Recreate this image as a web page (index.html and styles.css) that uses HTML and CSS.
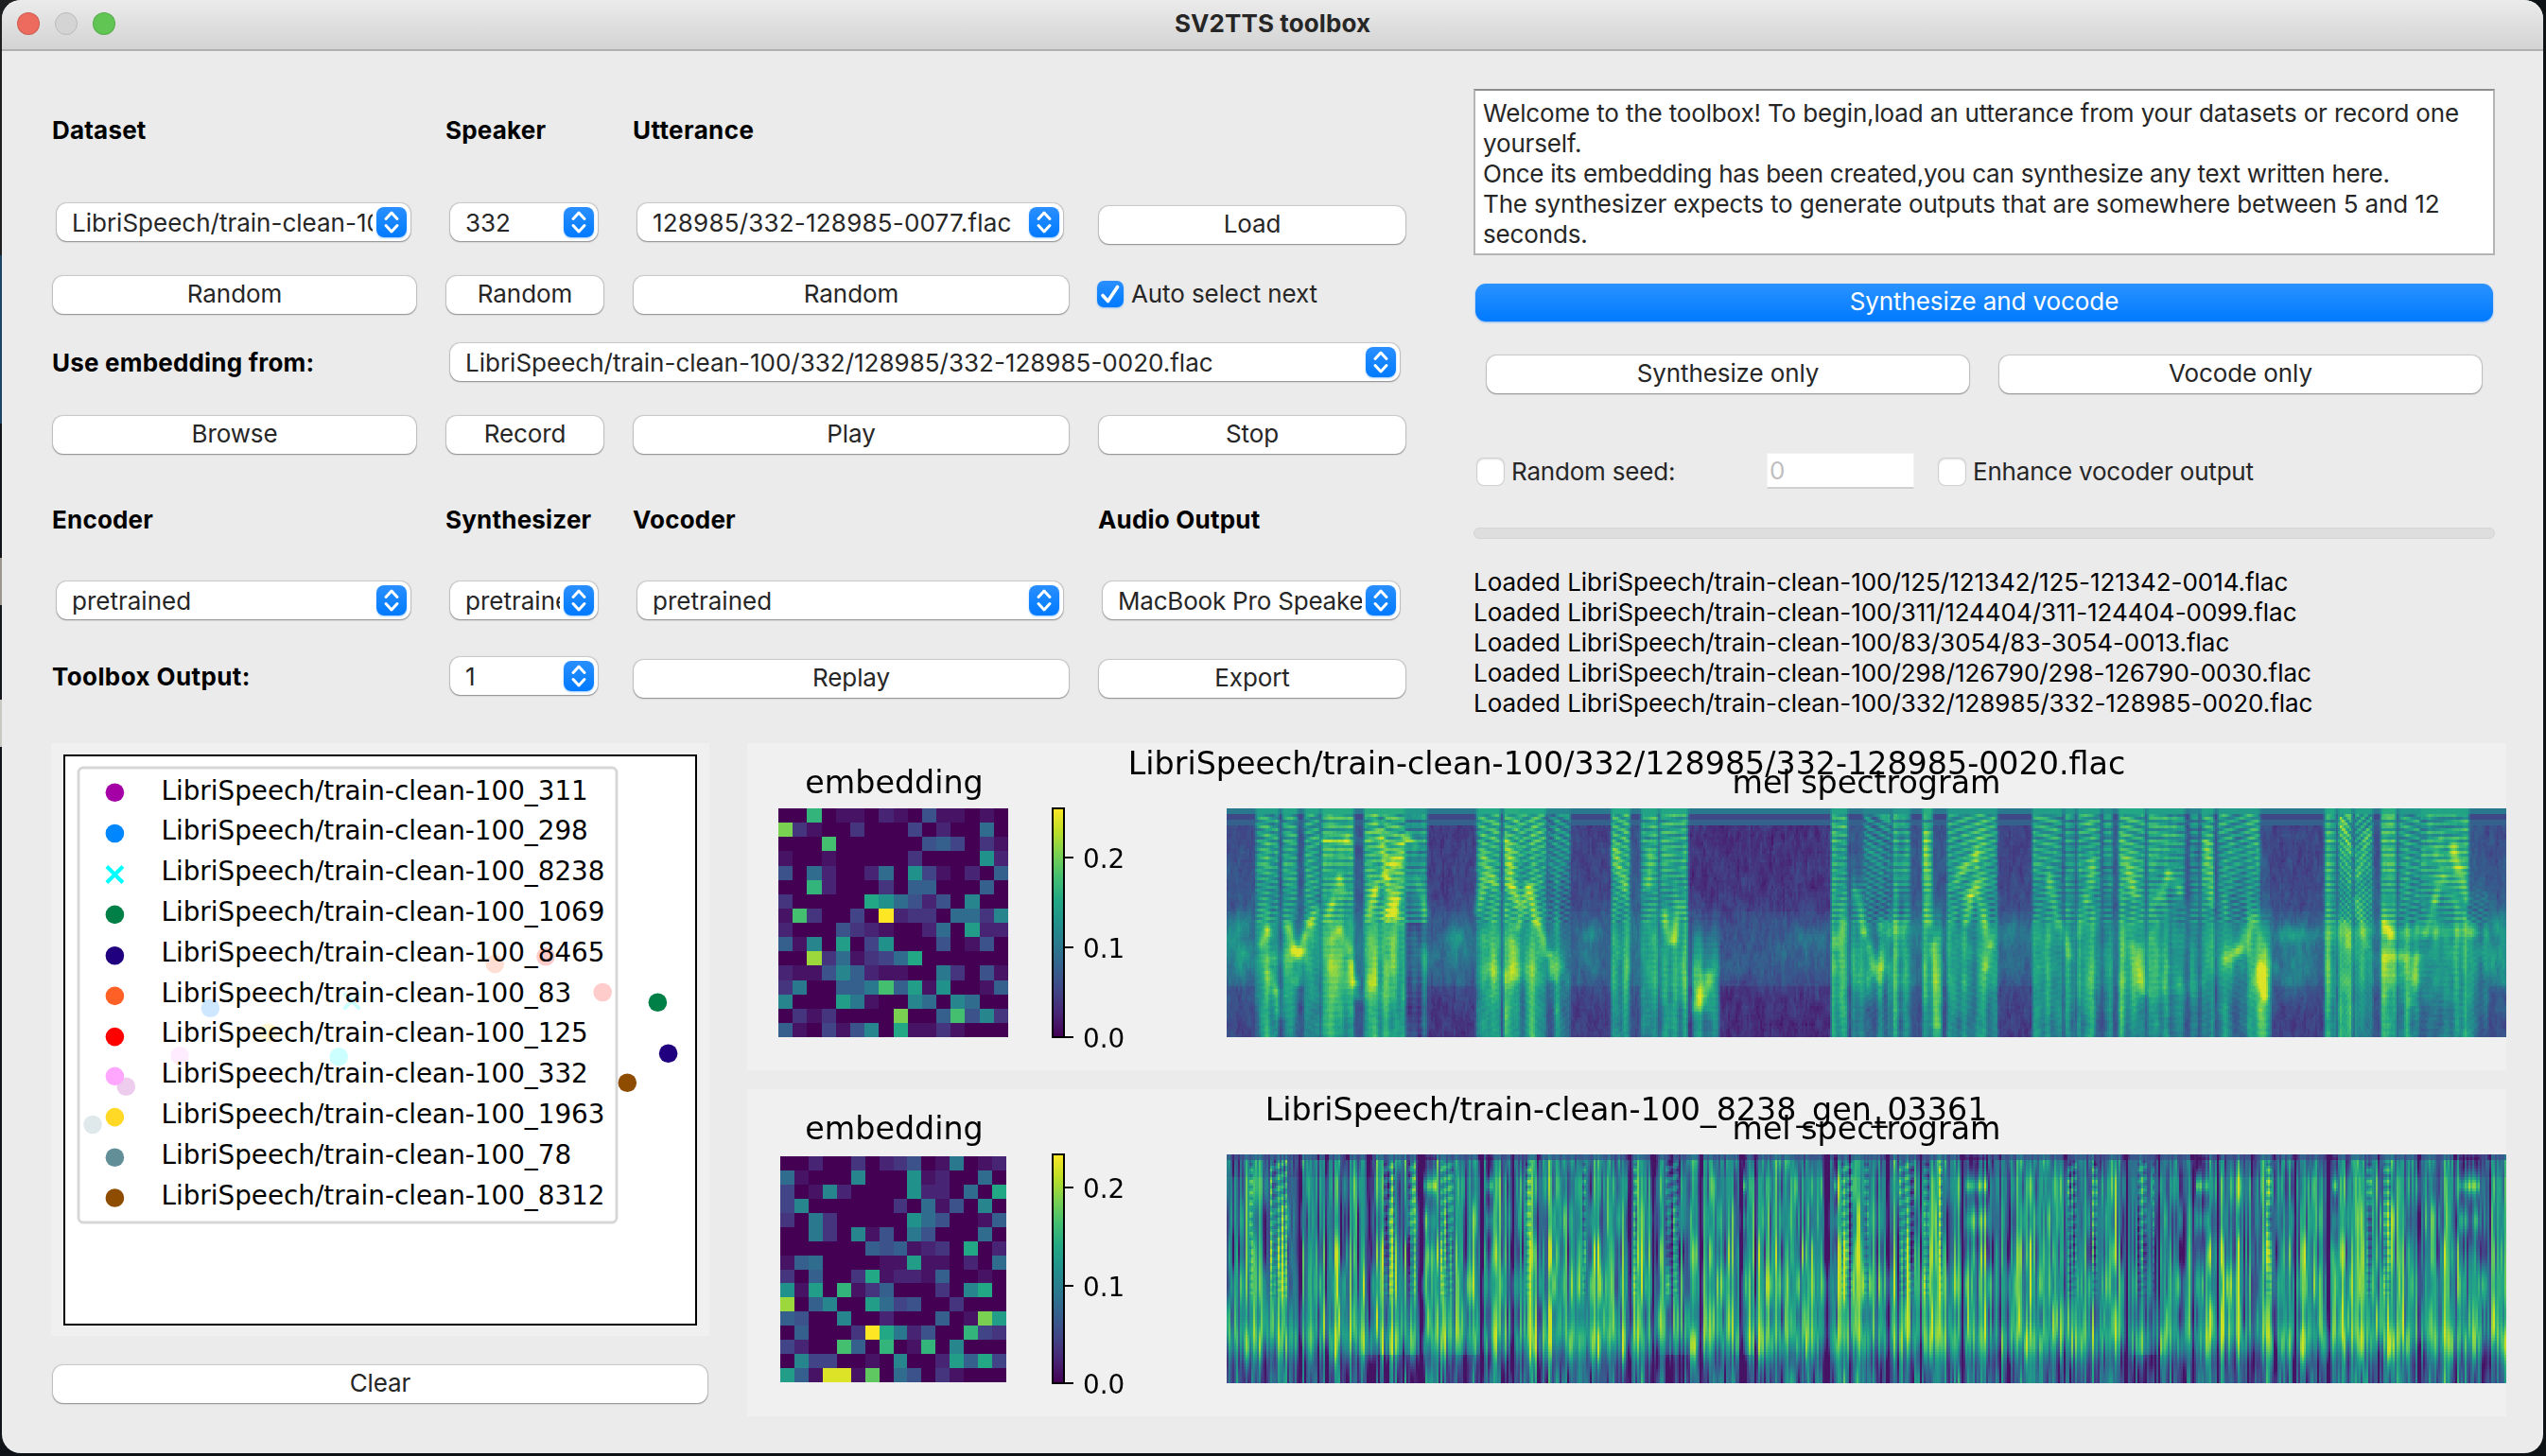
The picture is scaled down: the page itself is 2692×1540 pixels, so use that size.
FILE: index.html
```html
<!DOCTYPE html>
<html lang="en">
<head>
<meta charset="utf-8">
<title>SV2TTS toolbox</title>
<link rel="stylesheet" href="styles.css">
</head>
<body>
<svg class="defs" width="0" height="0">
  <defs>
    <linearGradient id="viridis" x1="0" y1="1" x2="0" y2="0">
      <stop offset="0" stop-color="#440154"/><stop offset=".1" stop-color="#482475"/>
      <stop offset=".2" stop-color="#414487"/><stop offset=".3" stop-color="#355f8d"/>
      <stop offset=".4" stop-color="#2a788e"/><stop offset=".5" stop-color="#21918c"/>
      <stop offset=".6" stop-color="#22a884"/><stop offset=".7" stop-color="#44bf70"/>
      <stop offset=".8" stop-color="#7ad151"/><stop offset=".9" stop-color="#bddf26"/>
      <stop offset="1" stop-color="#fde725"/>
    </linearGradient>
    <symbol id="updown" viewBox="0 0 32 32">
      <path d="M10 12.500 16 6l6 6.500M10 19.500 16 26l6-6.500" fill="none" stroke="#fff" stroke-width="3" stroke-linecap="round" stroke-linejoin="round"/>
    </symbol>
  </defs>
</svg>
<div class="window">
  <header class="titlebar">
    <div class="lights"><i class="light close"></i><i class="light minimize"></i><i class="light zoom"></i></div>
    <h1 class="title">SV2TTS toolbox</h1>
  </header>

  <main class="content">
    <section class="controls">
      <h2 class="label">Dataset</h2><h2 class="label">Speaker</h2><h2 class="label wide span2">Utterance</h2>

      <div class="combo"><span class="value">LibriSpeech/train-clean-100</span><svg class="arrows"><use href="#updown"/></svg></div>
      <div class="combo"><span class="value">332</span><svg class="arrows"><use href="#updown"/></svg></div>
      <div class="combo"><span class="value file">128985/332-128985-0077.flac</span><svg class="arrows"><use href="#updown"/></svg></div>
      <button class="btn low">Load</button>

      <button class="btn">Random</button><button class="btn">Random</button><button class="btn">Random</button>
      <label class="check auto"><span class="box on"><svg width="28" height="28" viewBox="0 0 28 28"><path d="M6 15.500 11.500 21.500 21.500 6.500" fill="none" stroke="#fff" stroke-width="3.600" stroke-linecap="round" stroke-linejoin="round"/></svg></span>Auto select next</label>

      <h2 class="label mid">Use embedding from:</h2>
      <div class="combo span3"><span class="value">LibriSpeech/train-clean-100/332/128985/332-128985-0020.flac</span><svg class="arrows"><use href="#updown"/></svg></div>

      <button class="btn">Browse</button><button class="btn">Record</button><button class="btn">Play</button><button class="btn">Stop</button>

      <h2 class="label">Encoder</h2><h2 class="label">Synthesizer</h2><h2 class="label">Vocoder</h2><h2 class="label">Audio Output</h2>

      <div class="combo"><span class="value">pretrained</span><svg class="arrows"><use href="#updown"/></svg></div>
      <div class="combo"><span class="value">pretrained</span><svg class="arrows"><use href="#updown"/></svg></div>
      <div class="combo"><span class="value">pretrained</span><svg class="arrows"><use href="#updown"/></svg></div>
      <div class="combo"><span class="value device">MacBook Pro Speakers</span><svg class="arrows"><use href="#updown"/></svg></div>

      <h2 class="label mid wide">Toolbox Output:</h2>
      <div class="combo"><span class="value">1</span><svg class="arrows"><use href="#updown"/></svg></div>
      <button class="btn low">Replay</button><button class="btn low">Export</button>
    </section>

    <section class="synth">
      <div class="prompt"><p>Welcome to the toolbox! To begin,load an utterance from your datasets or record one</p><p>yourself.</p><p class="tight">Once its embedding has been created,you can synthesize any text written here.</p><p>The synthesizer expects to generate outputs that are somewhere between 5 and 12</p><p>seconds.</p></div>
      <button class="btn primary">Synthesize and vocode</button>
      <div class="pair"><button class="btn">Synthesize only</button><button class="btn">Vocode only</button></div>
      <div class="options">
        <label class="check seed"><span class="box"></span>Random seed:</label>
        <span class="field">0</span>
        <label class="check"><span class="box"></span>Enhance vocoder output</label>
      </div>
      <div class="progress"></div>
      <div class="log">
        <p>Loaded LibriSpeech/train-clean-100/125/121342/125-121342-0014.flac</p>
        <p>Loaded LibriSpeech/train-clean-100/311/124404/311-124404-0099.flac</p>
        <p>Loaded LibriSpeech/train-clean-100/83/3054/83-3054-0013.flac</p>
        <p>Loaded LibriSpeech/train-clean-100/298/126790/298-126790-0030.flac</p>
        <p>Loaded LibriSpeech/train-clean-100/332/128985/332-128985-0020.flac</p>
      </div>
    </section>

    <section class="projection">
      <svg id="scatter" class="scatter" width="696" height="627" viewBox="54 786 696 627"></svg>
      <button class="btn">Clear</button>
    </section>

    <section class="figures">
      <div class="figure first">
        <canvas class="emb" id="emb1" width="243" height="242"></canvas>
        <canvas class="spec" id="spec1" width="677" height="80"></canvas>
        <svg class="axes" width="1860" height="346" viewBox="790 786 1860 346">
          <text class="big" x="945.500" y="839">embedding</text>
          <text class="big" x="1720" y="819">LibriSpeech/train-clean-100/332/128985/332-128985-0020.flac</text>
          <text class="big" x="1973.500" y="839">mel spectrogram</text>
          <rect class="bar" x="1113" y="855" width="12" height="242"/>
          <path class="tick" d="M1126 907h9M1126 1002h9M1126 1097h9"/>
          <text class="num" x="1145" y="917.700">0.2</text><text class="num" x="1145" y="1012.700">0.1</text><text class="num" x="1145" y="1107.700">0.0</text>
        </svg>
      </div>
      <div class="figure second">
        <canvas class="emb" id="emb2" width="239" height="239"></canvas>
        <canvas class="spec" id="spec2" width="677" height="80"></canvas>
        <svg class="axes" width="1860" height="346" viewBox="790 1152 1860 346">
          <text class="big" x="945.500" y="1205">embedding</text>
          <text class="big" x="1719.500" y="1185">LibriSpeech/train-clean-100_8238_gen_03361</text>
          <text class="big" x="1973.500" y="1205">mel spectrogram</text>
          <rect class="bar" x="1113" y="1221" width="12" height="242"/>
          <path class="tick" d="M1126 1256h9M1126 1360h9M1126 1463h9"/>
          <text class="num" x="1145" y="1267">0.2</text><text class="num" x="1145" y="1371">0.1</text><text class="num" x="1145" y="1474">0.0</text>
        </svg>
      </div>
    </section>
  </main>
</div>
<script src="plots.js"></script>
</body>
</html>
```
FILE: styles.css
```css
* { box-sizing: border-box; }
body {
  margin: 0;
  width: 2692px;
  height: 1540px;
  overflow: hidden;
  font: 400 26px/36px Inter, "Liberation Sans", sans-serif;
  color: #262626;
  background:
    linear-gradient(#1d1f20 0 270px, #1b4567 270px 448px, #101418 448px 590px, #9a958d 590px 640px, #15181b 640px 740px, #c9c7c1 740px 790px, #101418 790px) 0 0 / 20px 1540px no-repeat,
    #0d1214;
}
.defs { position: absolute; }
h1, h2, p { margin: 0; font-size: inherit; }

.window {
  width: 2687px;
  height: 1537px;
  margin-left: 2px;
  border-radius: 20px;
  overflow: hidden;
  background: #ebebeb;
}
.titlebar {
  height: 54px;
  display: grid;
  grid-template-columns: 1fr auto 1fr;
  align-items: center;
  padding: 0 16px 2px;
  background: linear-gradient(#ebebeb, #d3d3d3);
  border-bottom: 2px solid #b0b0b0;
}
.lights { display: flex; gap: 16px; }
.light { width: 24px; height: 24px; border-radius: 50%; border: 1px solid #00000022; }
.close { background: #ec6a5e; }
.minimize { background: #d4d4d4; border-color: #b9b9b9; }
.zoom { background: #61c554; }
.title { font-weight: 700; letter-spacing: 0.1px; line-height: 34px; }

.content {
  display: grid;
  grid-template-columns: 1430px 1fr;
  grid-template-rows: 732px 1fr;
}
.controls {
  padding: 65px 0 0 54px;
  display: grid;
  grid-template-columns: 384px 166px 460px 324px;
  grid-template-rows: 96px 77px 71px 77px 91px 84px 80px 43px;
  column-gap: 32px;
  align-items: start;
  align-content: start;
}
.span2 { grid-column: span 2; }
.span3 { grid-column: span 3; }
.label { font-weight: 700; color: #000; white-space: nowrap; margin: 1px 0 0 -1px; letter-spacing: 0.2px; }
.label.wide { letter-spacing: 0.4px; }
.label.mid { margin-top: 3px; }

.btn {
  display: block;
  width: 100%;
  height: 40px;
  padding: 0 0 2px;
  border: 0;
  border-radius: 11px;
  background: #fff;
  font: inherit;
  letter-spacing: -0.1px;
  line-height: 38px;
  color: #262626;
  text-align: center;
  box-shadow: 0 1px 1.5px #0000004d, 0 0 1px 0.5px #00000026;
}
.btn.low { margin-top: 3px; }
.combo {
  height: 40px;
  margin: 0 6px 0 4px;
  padding: 0 4px 0 16px;
  border-radius: 11px;
  background: #fff;
  display: flex;
  align-items: center;
  gap: 4px;
  box-shadow: 0 1px 1.5px #0000004d, 0 0 1px 0.5px #00000026;
}
.value { flex: 1; min-width: 0; overflow: hidden; white-space: nowrap; padding-top: 1px; }
.file { letter-spacing: 0.2px; }
.device { letter-spacing: -0.2px; }
.arrows {
  flex: none;
  width: 32px;
  height: 32px;
  border-radius: 8px;
  background: linear-gradient(#2a8fff, #007aff);
  box-shadow: 0 1px 2px #007aff66;
}
.check { display: flex; align-items: center; gap: 8px; white-space: nowrap; letter-spacing: -0.2px; }
.auto { margin: 0 0 0 -2px; height: 38px; letter-spacing: -0.1px; }
.box {
  width: 28px;
  height: 28px;
  border-radius: 7px;
  background: #fff;
  box-shadow: 0 0 1px 1px #0000001f, inset 0 1px 2px #0000001f;
}
.box.on { background: linear-gradient(#2a8fff, #007aff); box-shadow: 0 1px 2px #007aff66; }
.box svg { display: block; }

.synth { padding: 40px 0 0 126px; width: 1206px; }
.prompt {
  height: 176px;
  padding: 8px 0 0 8px;
  border: 2px solid #b4b4b4;
  border-top-color: #8e8e8e;
  background: #fff;
  line-height: 32px;
  white-space: nowrap;
  letter-spacing: -0.15px;
}
.tight { letter-spacing: -0.25px; }
.primary {
  width: 1076px;
  margin: 30px 2px 0;
  color: #fff;
  background: linear-gradient(#2a92ff, #007aff);
  box-shadow: 0 1px 2px #007aff80;
}
.pair { display: grid; grid-template-columns: 1fr 1fr; gap: 32px; padding: 36px 14px 0; }
.options { display: flex; align-items: center; height: 40px; margin-top: 62px; padding-left: 4px; }
.options .check { line-height: 38px; padding-top: 1px; }
.seed { width: 306px; }
.field {
  width: 156px;
  height: 38px;
  padding-left: 2px;
  margin-right: 26px;
  background: #fff;
  border: 1px solid #f2f2f2;
  border-bottom: 2px solid #d0d0d0;
  color: #bfbfbf;
}
.progress { height: 12px; margin-top: 40px; border-radius: 6px; background: #dedede; border: 1px solid #d4d4d4; }
.log { margin: 30px 0 0; line-height: 32px; color: #000; white-space: nowrap; letter-spacing: -0.04px; }

.projection { padding-left: 52px; }
.projection .btn { width: 692px; margin: 31px 0 0 2px; }
.scatter { display: block; background: #f0f0f0; }
.scatter text { font: 27.8px "DejaVu Sans", sans-serif; fill: #000; }

.figures { display: flex; flex-direction: column; gap: 20px; margin-left: -642px; }
.figure { position: relative; width: 1860px; height: 346px; background: #f0f0f0; }
.emb, .spec, .axes { position: absolute; }
.emb { left: 33px; top: 69px; }
.second .emb { left: 35px; top: 71px; }
.spec { left: 507px; top: 69px; width: 1353px; height: 242px; image-rendering: pixelated; }
.axes { left: 0; top: 0; }
.axes text { font-family: "DejaVu Sans", sans-serif; fill: #000; }
.big { font-size: 33.3px; text-anchor: middle; }
.num { font-size: 27.8px; }
.bar { fill: url(#viridis); stroke: #000; stroke-width: 2; }
.tick { stroke: #000; stroke-width: 2; }
```
FILE: plots.js
```js
// Viridis colour map, sampled at eleven stops.
const STOPS = [[68,1,84],[72,36,117],[65,68,135],[53,95,141],[42,120,142],[33,145,140],
  [34,168,132],[68,191,112],[122,209,81],[189,223,38],[253,231,37]];
function viridis(v) {
  const t = Math.max(0, Math.min(0.9999, v)) * 10, i = Math.floor(t), f = t - i;
  return STOPS[i].map((a, k) => a + (STOPS[i + 1][k] - a) * f);
}
let seed = 7;
const rnd = () => (seed = (seed * 1664525 + 1013904223) % 4294967296) / 4294967296;

// Speaker embeddings: 16 x 16 cells, each a base-36 level from 0 to 20.
const EMB1 = ['00d0110210511010','g310030004020070','000e000000564031','10010000030000a2',
  '507200270a410206','00d2000306600060','300000ca75250900','1e30040k23307739',
  '2000532100270b22','6190b04a00050150','00h371347c000000','2115962110083051',
  '3800668e6b1a0016','9000b81009709700','03130000g006e593','61041590c1131000'];
const EMB2 = ['0020030235018012','710009000a120070','401920000a22070c','4900000030715090',
  '308300000a750016','0083091508500070','0000006561230c02','167000011b110207',
  '306003c122160010','a1b0d136000309c0','h06900b745003000','65009002000601gb',
  '060003kc82500d43','4200e60d01d09000','094400109002b6c4','b61jj1f075031000'];
function drawEmbedding(id, rows) {
  const c = document.getElementById(id), g = c.getContext('2d'), w = c.width / 16, h = c.height / 16;
  rows.forEach((r, j) => [...r].forEach((ch, i) => {
    g.fillStyle = `rgb(${viridis(parseInt(ch, 36) / 20).map(Math.round)})`;
    const x = Math.round(i * w), y = Math.round(j * h);
    g.fillRect(x, y, Math.round((i + 1) * w) - x, Math.round((j + 1) * h) - y);
  }));
}
drawEmbedding('emb1', EMB1);
drawEmbedding('emb2', EMB2);

function paint(id, value) {
  const c = document.getElementById(id), g = c.getContext('2d'), im = g.createImageData(c.width, c.height);
  for (let i = 0; i < c.width; i++) for (let j = 0; j < c.height; j++) {
    const p = viridis(value(19 + i * 1502 / c.width, (j + 0.5) / c.height, i, j)), o = (j * c.width + i) * 4;
    im.data[o] = p[0]; im.data[o + 1] = p[1]; im.data[o + 2] = p[2]; im.data[o + 3] = 255;
  }
  g.putImageData(im, 0, 0);
}
const gauss = (d, s) => Math.exp(-d * d / (2 * s * s));
// Smooth one-dimensional noise in 0..1.
function noise(n, step) {
  const k = Array.from({ length: Math.ceil(n / step) + 2 }, rnd);
  return i => { const t = i / step, a = Math.floor(t), f = t - a, s = f * f * (3 - 2 * f); return k[a] * (1 - s) + k[a + 1] * s; };
}
// Smooth two-dimensional noise in 0..1.
function noise2(w, h, sx, sy) {
  const rows = Array.from({ length: Math.ceil(h / sy) + 2 }, () => noise(w, sx));
  return (i, j) => { const t = j / sy, a = Math.floor(t), f = t - a; return rows[a](i) * (1 - f) + rows[a + 1](i) * f; };
}

// Utterance: syllables as [start, end, level, top, harmonic slope].
const SYL = [[53,78,.6,0,.0008],[84,100,.62,0,.0006],[110,126,.62,0,-.0012],[130,166,.65,0,.0002],[180,205,.66,0,-.0006],[204,228,.66,0,.0006],
  [228,252,.57,0,0],[312,338,.64,0,.0013],[344,362,.66,0,.0013],[362,392,.64,0,-.0016],[396,420,.5,0,.002],[470,490,.64,0,.0018],[505,523,.62,0,.0004],
  [527,558,.63,0,-.0004],[565,595,.55,.55,0],[728,745,.62,0,.0005],[752,765,.55,.3,0],[766,797,.5,0,.002],[801,820,.57,0,0],
  [836,846,.66,0,0],[847,857,.62,.5,0],[865,922,.58,0,-.0012],[965,998,.6,0,.0008],[1003,1013,.58,0,0],[1018,1043,.6,0,-.0008],
  [1048,1057,.55,0,0],[1066,1095,.64,0,.001],[1100,1142,.6,0,.0003],[1150,1158,.5,0,0],[1163,1176,.62,0,.001],
  [1183,1230,.58,0,-.0012],[1228,1243,.58,.5,0],[1308,1319,.64,0,0],[1324,1338,.62,0,.004],[1343,1362,.6,0,-.0035],
  [1374,1390,.66,0,0],[1395,1419,.57,0,.001],[1420,1475,.62,0,-.0003],[1475,1497,.48,.4,.002]];
// Quiet stretches: [start, end, level].
const GAPS = [[19,53,.27],[252,312,.21],[420,470,.23],[558,728,.18],[922,965,.23],[1243,1308,.24],[1495,1522,.28]];
// Formant tracks: [spread, gain, x, y, x, y, ...].
const TRACKS = [
  [3,.24,58,.6,66,.53,70,.56],[4,.26,68,.72,76,.8,80,.9],[3.5,.34,90,.52,98,.62,102,.64],[3.5,.34,102,.76,106,.62,110,.56],[4,.3,106,.58,116,.5,124,.44],
  [3.5,.26,134,.48,142,.42,150,.3],[3,.22,150,.3,158,.38],[3.5,.22,140,.58,150,.53,162,.62],[3.5,.34,164,.68,168,.76,170,.82],
  [3.5,.3,184,.48,192,.36,202,.28],[3.5,.3,198,.1,206,.3,212,.45],[3.5,.3,208,.48,218,.4,222,.2],[3.5,.3,222,.16,230,.13,240,.16],[3,.22,240,.3,252,.46],
  [3.5,.26,318,.2,332,.33],[3.5,.26,312,.45,320,.3],[4,.34,346,.14,352,.34,360,.42],[3.5,.36,360,.52,372,.34],[3.5,.34,372,.34,382,.5,394,.64],[4,.3,398,.64,400,.74],
  [3.5,.24,352,.58,358,.74],[4,.26,474,.18,484,.34],[3.5,.3,512,.34,516,.2],[4,.34,532,.46,538,.58],[4,.3,542,.58,550,.42],[6,.36,572,.86,582,.74],
  [4,.26,734,.6,742,.5],[3.5,.3,756,.36,766,.54,772,.6],[4,.28,772,.62,784,.75],[3.5,.25,786,.7,794,.55],[3.5,.26,840,.1,842,.5],[3.5,.3,848,.6,852,.95],
  [4,.24,870,.34,884,.26,898,.2],[4,.34,886,.5,892,.38,898,.32],[3,.28,898,.34,914,.6,910,.7],
  [3.5,.26,984,.3,994,.52],[3,.22,998,.5,1008,.65],[3.5,.2,1018,.56,1028,.4,1036,.22],[4,.3,1072,.22,1084,.38],[4,.28,1082,.6,1096,.8],
  [3.5,.24,1112,.4,1124,.28,1138,.36],[3.5,.28,1168,.15,1174,.42],[5,.28,1192,.66,1208,.62,1222,.48],[4,.3,1232,.7,1236,.82],
  [2.5,.28,1326,.05,1338,.2],[2.5,.28,1346,.3,1358,.1],[3.5,.3,1330,.5,1334,.6],[3.5,.28,1344,.4,1356,.6],[3.5,.3,1376,.5,1386,.56],
  [3.5,.3,1408,.85,1416,.65],[3.5,.3,1426,.55,1436,.4,1446,.3],[4,.32,1458,.16,1464,.26,1472,.4],[4,.2,1460,.4,1480,.55]];
// Energy patches: [x, y, spread x, spread y, gain].
const BLOBS = [[148,.14,16,.012,.22],[214,.24,8,.02,.2],[214,.48,8,.03,.2],[210,.62,8,.2,.1],[70,.66,10,.02,.12],[100,.64,8,.03,.16],
  [444,.55,9,.03,.14],[444,.7,9,.06,.12],[290,.55,12,.04,.14],[290,.68,10,.09,.13],[700,.56,16,.05,.1],[690,.7,26,.08,.06],[578,.8,9,.09,.16],[780,.7,14,.08,.12],
  [900,.25,10,.1,.12],[942,.55,16,.04,.12],[942,.7,12,.05,.08],[1084,.75,10,.1,.14],[1200,.62,14,.06,.12],[1236,.78,7,.1,.2],[1270,.55,18,.03,.16],
  [1270,.7,16,.09,.15],[1420,.54,80,.02,.14],[1395,.65,20,.02,.18],[1448,.22,14,.06,.14],[30,.62,16,.1,.18],[1510,.62,14,.14,.18],
  [1395,.74,20,.03,.14],[1130,.78,14,.03,.14],[346,.72,20,.03,.12],[620,.7,30,.06,.04],[800,.53,20,.03,.16],[790,.74,20,.05,.12],
  [150,.72,8,.05,.1],[186,.77,8,.04,.1],[252,.66,16,.05,.14],[405,.7,8,.05,.14]];
function segDist(x, y, ax, ay, bx, by) {
  const dx = bx - ax, dy = (by - ay) * 300, px = x - ax, py = (y - ay) * 300;
  const t = Math.max(0, Math.min(1, (px * dx + py * dy) / (dx * dx + dy * dy)));
  return Math.hypot(px - t * dx, py - t * dy);
}
const grain = noise2(677, 80, 1.2, 3), texture = noise2(677, 80, 3, 5), low = noise2(677, 80, 4, 9), ridge = noise(677, 2.6);
paint('spec1', (x, y, i, j) => {
  let q = .3;
  for (const [a, b, l] of GAPS) if (x >= a && x < b) q = l;
  let v = q + .08 * gauss(y - .6, .13) + .1 * (grain(i, j) - .5) + .04 * (rnd() - .5) + .06 * (texture(i, j) - .5);
  if (y > .08 && y < .45) v -= .03;
  if (y > .78) v -= .05;
  if (y < .02) v = .4; else if (y < .045) v = .22; else if (y < .07) v = .31;
  for (const [a, b, l, top, k] of SYL) {
    if (x < a - 3 || x > b + 3) continue;
    const edge = Math.min(1, (x - a + 3) / 4, (b + 3 - x) / 4) * (top ? 1 / (1 + Math.exp((top - y) * 25)) : 1);
    if (edge <= 0) continue;
    const r = Math.max(0, y - (x - a) * k), ph = 26 * r + 13 * r * r, st = Math.cos(ph * 2 * Math.PI);
    const depth = y < .16 ? .13 : y < .5 ? .1 : .02;
    const mix = Math.min(1, Math.max(0, (y - .35) * 3));
    let u = l - .04 + depth * st + (ridge(i) - .5) * (.1 + .2 * mix) + (texture(i, j) - .5) * .14 + (rnd() - .5) * .04;
    u += -.05 * gauss(y - .42, .08) + .04 * gauss(y - .66, .1);
    if (y > .72) u -= .22 * (low(i, 20) - .2) * Math.min(1, (y - .72) * 5);
    if (a === 228 && y > .5) u -= .2;
    if (y < .02) u = l - .04;
    v += (u - v) * edge;
  }
  if (y > .03) {
    for (const t of TRACKS) for (let n = 2; n < t.length - 2; n += 2) {
      if (x < Math.min(t[n], t[n + 2]) - 14 || x > Math.max(t[n], t[n + 2]) + 14) continue;
      const g = t[1] * .8 * gauss(segDist(x, y, t[n], t[n + 1], t[n + 2], t[n + 3]), t[0]);
      if (g > .02) v += g * (1 - v * .55);
    }
    for (const b of BLOBS) v += b[4] * gauss(x - b[0], b[2]) * gauss(y - b[1], b[3]) * (.6 + .8 * texture(i, j));
  }
  return Math.min(v, .95);
});

// Generated audio: dense vertical striping with a slowly changing column profile.
const layers = [0, 1, 2, 3, 4, 5, 6, 7].map(() => [noise(677, 1), noise(677, 2.4)]);
const DARK = [[104,1.5],[125,1.5],[135,2],[160,2],[185,2.5],[245,3],[316,3],[354,1.5],[384,1.5],[490,2.5],[518,2.5],[540,1],[574,1.5],[622,3],
  [638,2],[722,3],[748,1],[794,2.5],[833,1.5],[882,2.5],[926,1.5],[1002,2],[1074,3],[1112,1.5],[1152,2.5],[1182,2],[1222,1.5],[1248,1.5],
  [1272,2.5],[1312,3],[1370,1.5],[1418,2],[1460,2],[1500,1.5]];
const VOICED = [[45,49],[68,88],[203,216],[230,240],[268,284],[368,374],[434,440],[494,500],[532,548],[740,752],[765,772],[808,826],
  [836,843],[854,859],[1006,1016],[1034,1040],[1088,1098],[1104,1108],[1238,1244],[1355,1362],[1375,1384]];
const FRIC = [[257,8],[326,5],[626,3],[732,3],[899,13],[1164,8],[1319,4],[1477,12]];
paint('spec2', (x, y, i, j) => {
  const t = y * 7, a = Math.min(6, Math.floor(t)), f = t - a, s = f * f * (3 - 2 * f);
  const L = n => layers[n][0](i) * .55 + layers[n][1](i) * .45;
  let c = L(a) * (1 - s) + L(a + 1) * s;
  c = c * .5 + L(3) * .5 - .5;
  let v = .48 + c * 1.2;
  v += .1 * gauss(y - .57, .12) + .15 * gauss(y - .79, .045) - .14 * (y > .85 ? Math.min(1, (y - .85) * 14) : 0);
  v -= .04 * gauss(y - .4, .08);
  if (y < .022) v = v * .4 + .1; else if (y < .1) v -= .06;
  for (const [p, q] of VOICED) if (x > p && x < q && y > .02 && y < .62)
    v += .14 * (1 - y) * Math.cos((y * 18 + y * y * 9 - .3 + (q - p > 9 ? (x - p) * .035 : 0)) * 2 * Math.PI);
  for (const [p, w] of FRIC) {
    const m = Math.abs(x - p) < w ? 1 : 0;
    if (y < .55) v += m * (.22 * gauss(y - .14, .018) - .26 * gauss(y - .04, .035) - .16 * gauss(y - .21, .035) + .08 * gauss(y - .29, .03) - .1 * gauss(y - .37, .04));
  }
  for (const [p, w] of DARK) v -= .42 * gauss(x - p, w * .8);
  if (y > .88) for (const [p, w] of [[200,18],[235,10],[300,14],[545,12],[628,8],[1100,12]]) v -= .14 * gauss(x - p, w);
  return Math.max(.05, Math.min(.92, v));
});

// Speaker projection with its legend.
const SPEAKERS = [['311','#a500a5',838.3],['298','#0087ff',881.5],['8238','#00ffff',925],['1069','#007f46',967.4],
  ['8465','#21007f',1010.7],['83','#ff6026',1053.4],['125','#ff0000',1096.6],['332','#ffa7ff',1138.4],
  ['1963','#ffd926',1181.6],['78','#618e97',1224.3],['8312','#8e4c00',1267]];
const POINTS = [[222.4,1066.2,'#0087ff'],[283.5,1092.2,'#ffd926'],[190,1116.8,'#ffa7ff'],[358.2,1117.7,'#00ffff'],[133.3,1149.2,'#a500a5'],
  [98,1189.5,'#618e97'],[523.3,1019.5,'#ff6026'],[577,1011.7,'#ff0000'],[637.2,1049.5,'#ff0000'],[695.4,1060.3,'#007f46'],
  [706.6,1114.3,'#21007f'],[663.3,1145.2,'#8e4c00']];
const dot = (x, y, c) => `<circle cx="${x}" cy="${y}" r="9.8" fill="${c}"/>`;
const cross = (x, y) => `<path d="M${x - 8.5} ${y - 8.5}l17 17m0 -17l-17 17" stroke="#0ff" stroke-width="4"/>`;
document.getElementById('scatter').innerHTML =
  '<rect x="68" y="799" width="668" height="602" fill="#fff" stroke="#000" stroke-width="2"/>' +
  POINTS.map(p => dot(...p)).join('') + cross(372, 1058.8) +
  '<rect x="83" y="812" width="569" height="481" rx="5" fill="#fff" fill-opacity=".8" stroke="#ccc" stroke-opacity=".8" stroke-width="2.8"/>' +
  SPEAKERS.map(([n, c, y], i) => (n === '8238' ? cross(121.4, y) : dot(121.4, y, c)) +
    `<text x="170.5" y="${845.5 + i * 42.82}">LibriSpeech/train-clean-100_${n}</text>`).join('');
```
